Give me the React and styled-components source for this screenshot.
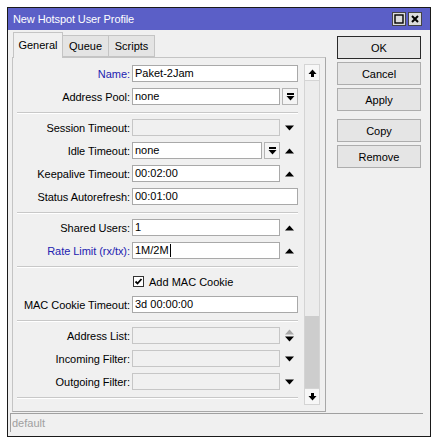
import styled, { createGlobalStyle } from 'styled-components';

const GlobalStyle = createGlobalStyle`
  html, body {
    margin: 0;
    background: #ffffff;
  }
  body {
    font-family: "Liberation Sans", Arial, sans-serif;
    font-size: 11px;
    color: #000;
  }
`;

const Window = styled.div`
  box-sizing: border-box;
  margin: 7px 0 0 7px;
  width: 424px;
  height: 430px;
  border: 1px solid #1a1a1a;
  background: #f0f0f0;
  display: flex;
  flex-direction: column;
`;

const TitleBar = styled.div`
  height: 22px;
  background: #5b5fc7;
  display: flex;
  align-items: center;
  padding: 0 8px 0 5px;
`;

const Title = styled.div`
  flex: 1;
  color: #fff;
  font-size: 11px;
  letter-spacing: -0.1px;
`;

const TitleButtons = styled.div`
  display: flex;
  gap: 2px;
`;

const TitleBtn = styled.div`
  box-sizing: border-box;
  width: 14px;
  height: 14px;
  background: #dcdcdc;
  border: 1px solid #444;
  display: flex;
  align-items: center;
  justify-content: center;
`;

const Main = styled.div`
  display: flex;
  height: 382px;
`;

const LeftCol = styled.div`
  margin-left: 4px;
  padding-top: 1px;
  display: flex;
  flex-direction: column;
`;

const TabStrip = styled.div`
  height: 26px;
  display: flex;
  align-items: flex-end;
  padding-left: 1px;
`;

const Tab = styled.div`
  box-sizing: border-box;
  width: ${(p) => p.$w}px;
  height: ${(p) => (p.$active ? 26 : 22)}px;
  margin-bottom: ${(p) => (p.$active ? -1 : 0)}px;
  position: relative;
  z-index: ${(p) => (p.$active ? 1 : 0)};
  background: ${(p) => (p.$active ? '#f0f0f0' : '#e4e4e4')};
  border: 1px solid #c4c4c4;
  border-bottom: ${(p) => (p.$active ? 'none' : '1px solid #c4c4c4')};
  border-left: ${(p) => (p.$first || p.$active ? '1px solid #c4c4c4' : 'none')};
  display: flex;
  align-items: center;
  justify-content: center;
  padding-bottom: ${(p) => (p.$active ? 2 : 0)}px;
`;

const Panel = styled.div`
  box-sizing: border-box;
  width: 314px;
  height: 355px;
  border: 1px solid #c4c4c4;
  border-right-color: #a8a8a8;
  border-bottom-color: #a8a8a8;
  display: flex;
`;

const Form = styled.div`
  width: 286px;
  display: flex;
  flex-direction: column;
`;

const Section = styled.div`
  display: flex;
  flex-direction: column;
  gap: 6px;
  padding: ${(p) => (p.$first ? 7 : 5)}px 0 7px;
`;

const Separator = styled.div`
  margin-left: 4px;
  width: 281px;
  height: 1px;
  background: #c8c8c8;
  border-bottom: 1px solid #ffffff;
`;

const Row = styled.div`
  display: grid;
  grid-template-columns: 117px 166px;
  column-gap: 2px;
  height: 17px;
  align-items: center;
`;

const Label = styled.div`
  text-align: right;
  white-space: nowrap;
  color: ${(p) => (p.$accent ? '#2222b0' : '#000')};
  letter-spacing: -0.05px;
`;

const Field = styled.div`
  display: flex;
  height: 17px;
`;

const Input = styled.div`
  box-sizing: border-box;
  flex: 1;
  height: 17px;
  border: 1px solid ${(p) => (p.$disabled ? '#c6c6c6' : '#a9a9a9')};
  background: ${(p) => (p.$disabled ? '#f0f0f0' : '#ffffff')};
  padding: 0 2px;
  line-height: 15px;
  white-space: nowrap;
  overflow: hidden;
  display: flex;
  align-items: center;
`;

const Caret = styled.span`
  display: inline-block;
  width: 1px;
  height: 13px;
  background: #000;
  margin-left: 1px;
`;

const DropBtn = styled.div`
  box-sizing: border-box;
  width: 16px;
  height: 17px;
  margin-left: 2px;
  border: 1px solid #b4b4b4;
  background: #f4f4f4;
  display: flex;
  align-items: center;
  justify-content: center;
`;

const ArrowSlot = styled.div`
  width: 17px;
  display: flex;
  align-items: center;
  justify-content: center;
  padding-left: 1px;
`;

const CheckWrap = styled.div`
  display: flex;
  align-items: center;
  gap: 5px;
  padding-left: 1px;
  grid-column: 2;
`;

const CheckBox = styled.div`
  box-sizing: border-box;
  width: 11px;
  height: 11px;
  border: 1px solid #333;
  background: #fff;
  display: flex;
  align-items: center;
  justify-content: center;
`;

const Scrollbar = styled.div`
  box-sizing: border-box;
  margin: 6px 0 0 5px;
  width: 16px;
  height: 341px;
  border: 1px solid #d4d4d4;
  background: #ececec;
  display: flex;
  flex-direction: column;
`;

const ScrollBtn = styled.div`
  height: 15px;
  background: #f7f7f7;
  border-bottom: ${(p) => (p.$top ? '1px solid #d4d4d4' : 'none')};
  border-top: ${(p) => (p.$top ? 'none' : '1px solid #d4d4d4')};
  display: flex;
  align-items: center;
  justify-content: center;
`;

const Track = styled.div`
  flex: 1;
  display: flex;
  flex-direction: column;
  justify-content: flex-end;
`;

const Thumb = styled.div`
  height: 72px;
  background: #cdcdcd;
`;

const ButtonCol = styled.div`
  margin: 6px 0 0 11px;
  width: 84px;
  display: flex;
  flex-direction: column;
  gap: 3px;
`;

const Button = styled.div`
  box-sizing: border-box;
  height: 23px;
  border: 1px solid ${(p) => (p.$default ? '#2a2a2a' : '#adadad')};
  background: #e5e5e5;
  display: flex;
  align-items: center;
  justify-content: center;
  margin-top: ${(p) => (p.$gapAbove ? 5 : 0)}px;
`;

const StatusBar = styled.div`
  box-sizing: border-box;
  margin: 1px 7px 0 2px;
  height: 19px;
  border-top: 1px solid #a0a0a0;
  border-left: 1px solid #a0a0a0;
  color: #a0a0a0;
  padding-left: 1px;
  display: flex;
  align-items: center;
`;

const Up = ({ color = '#000' }) => (
  <svg width="9" height="6" viewBox="0 0 9 6">
    <path d="M0 5.5 L4.5 0.5 L9 5.5 Z" fill={color} />
  </svg>
);

const Down = ({ color = '#000' }) => (
  <svg width="9" height="6" viewBox="0 0 9 6">
    <path d="M0 0.5 L4.5 5.5 L9 0.5 Z" fill={color} />
  </svg>
);

const UpDown = () => (
  <svg width="9" height="13" viewBox="0 0 9 13">
    <path d="M0 5.5 L4.5 0.5 L9 5.5 Z" fill="#a8a8a8" />
    <path d="M0 7.5 L4.5 12.5 L9 7.5 Z" fill="#000" />
  </svg>
);

const DropIcon = () => (
  <svg width="9" height="8" viewBox="0 0 9 8">
    <rect x="1" y="0" width="7" height="2" fill="#000" />
    <path d="M0.5 3 L4.5 7.5 L8.5 3 Z" fill="#000" />
  </svg>
);

const ScrollUp = () => (
  <svg width="9" height="8" viewBox="0 0 9 8">
    <path d="M0.5 5 L4.5 0.5 L8.5 5 Z" fill="#000" />
    <rect x="3" y="5" width="3" height="3" fill="#000" />
  </svg>
);

const ScrollDown = () => (
  <svg width="9" height="8" viewBox="0 0 9 8">
    <rect x="3" y="0" width="3" height="3" fill="#000" />
    <path d="M0.5 3 L4.5 7.5 L8.5 3 Z" fill="#000" />
  </svg>
);

function FieldRow({ label, value, accent, disabled, drop, arrow, caret }) {
  return (
    <Row>
      <Label $accent={accent}>{label}:</Label>
      <Field>
        <Input $disabled={disabled}>
          {value}
          {caret && <Caret />}
        </Input>
        {drop && (
          <DropBtn>
            <DropIcon />
          </DropBtn>
        )}
        {arrow && (
          <ArrowSlot>
            {arrow === 'up' && <Up />}
            {arrow === 'down' && <Down />}
            {arrow === 'both' && <UpDown />}
          </ArrowSlot>
        )}
      </Field>
    </Row>
  );
}

export default function App() {
  return (
    <>
      <GlobalStyle />
      <Window>
        <TitleBar>
          <Title>New Hotspot User Profile</Title>
          <TitleButtons>
            <TitleBtn>
              <svg width="10" height="10" viewBox="0 0 10 10">
                <rect x="1" y="1" width="8" height="8" fill="none" stroke="#000" strokeWidth="1.4" />
              </svg>
            </TitleBtn>
            <TitleBtn>
              <svg width="10" height="10" viewBox="0 0 10 10">
                <path d="M2 2 L8 8 M8 2 L2 8" stroke="#000" strokeWidth="2" />
              </svg>
            </TitleBtn>
          </TitleButtons>
        </TitleBar>
        <Main>
          <LeftCol>
            <TabStrip>
              <Tab $active $first $w={50}>General</Tab>
              <Tab $w={46}>Queue</Tab>
              <Tab $w={46}>Scripts</Tab>
            </TabStrip>
            <Panel>
              <Form>
                <Section $first>
                  <FieldRow label="Name" value="Paket-2Jam" accent />
                  <FieldRow label="Address Pool" value="none" drop />
                </Section>
                <Separator />
                <Section>
                  <FieldRow label="Session Timeout" disabled arrow="down" />
                  <FieldRow label="Idle Timeout" value="none" drop arrow="up" />
                  <FieldRow label="Keepalive Timeout" value="00:02:00" arrow="up" />
                  <FieldRow label="Status Autorefresh" value="00:01:00" />
                </Section>
                <Separator />
                <Section>
                  <FieldRow label="Shared Users" value="1" arrow="up" />
                  <FieldRow label="Rate Limit (rx/tx)" value="1M/2M" accent caret arrow="up" />
                </Section>
                <Separator />
                <Section>
                  <Row>
                    <CheckWrap>
                      <CheckBox>
                        <svg width="9" height="9" viewBox="0 0 9 9">
                          <path d="M1.5 4.5 L3.5 6.5 L7.5 2" fill="none" stroke="#000" strokeWidth="1.8" />
                        </svg>
                      </CheckBox>
                      Add MAC Cookie
                    </CheckWrap>
                  </Row>
                  <FieldRow label="MAC Cookie Timeout" value="3d 00:00:00" />
                </Section>
                <Separator />
                <Section>
                  <FieldRow label="Address List" disabled arrow="both" />
                  <FieldRow label="Incoming Filter" disabled arrow="down" />
                  <FieldRow label="Outgoing Filter" disabled arrow="down" />
                </Section>
                <Separator />
              </Form>
              <Scrollbar>
                <ScrollBtn $top>
                  <ScrollUp />
                </ScrollBtn>
                <Track>
                  <Thumb />
                </Track>
                <ScrollBtn>
                  <ScrollDown />
                </ScrollBtn>
              </Scrollbar>
            </Panel>
          </LeftCol>
          <ButtonCol>
            <Button $default>OK</Button>
            <Button>Cancel</Button>
            <Button>Apply</Button>
            <Button $gapAbove>Copy</Button>
            <Button>Remove</Button>
          </ButtonCol>
        </Main>
        <StatusBar>default</StatusBar>
      </Window>
    </>
  );
}
